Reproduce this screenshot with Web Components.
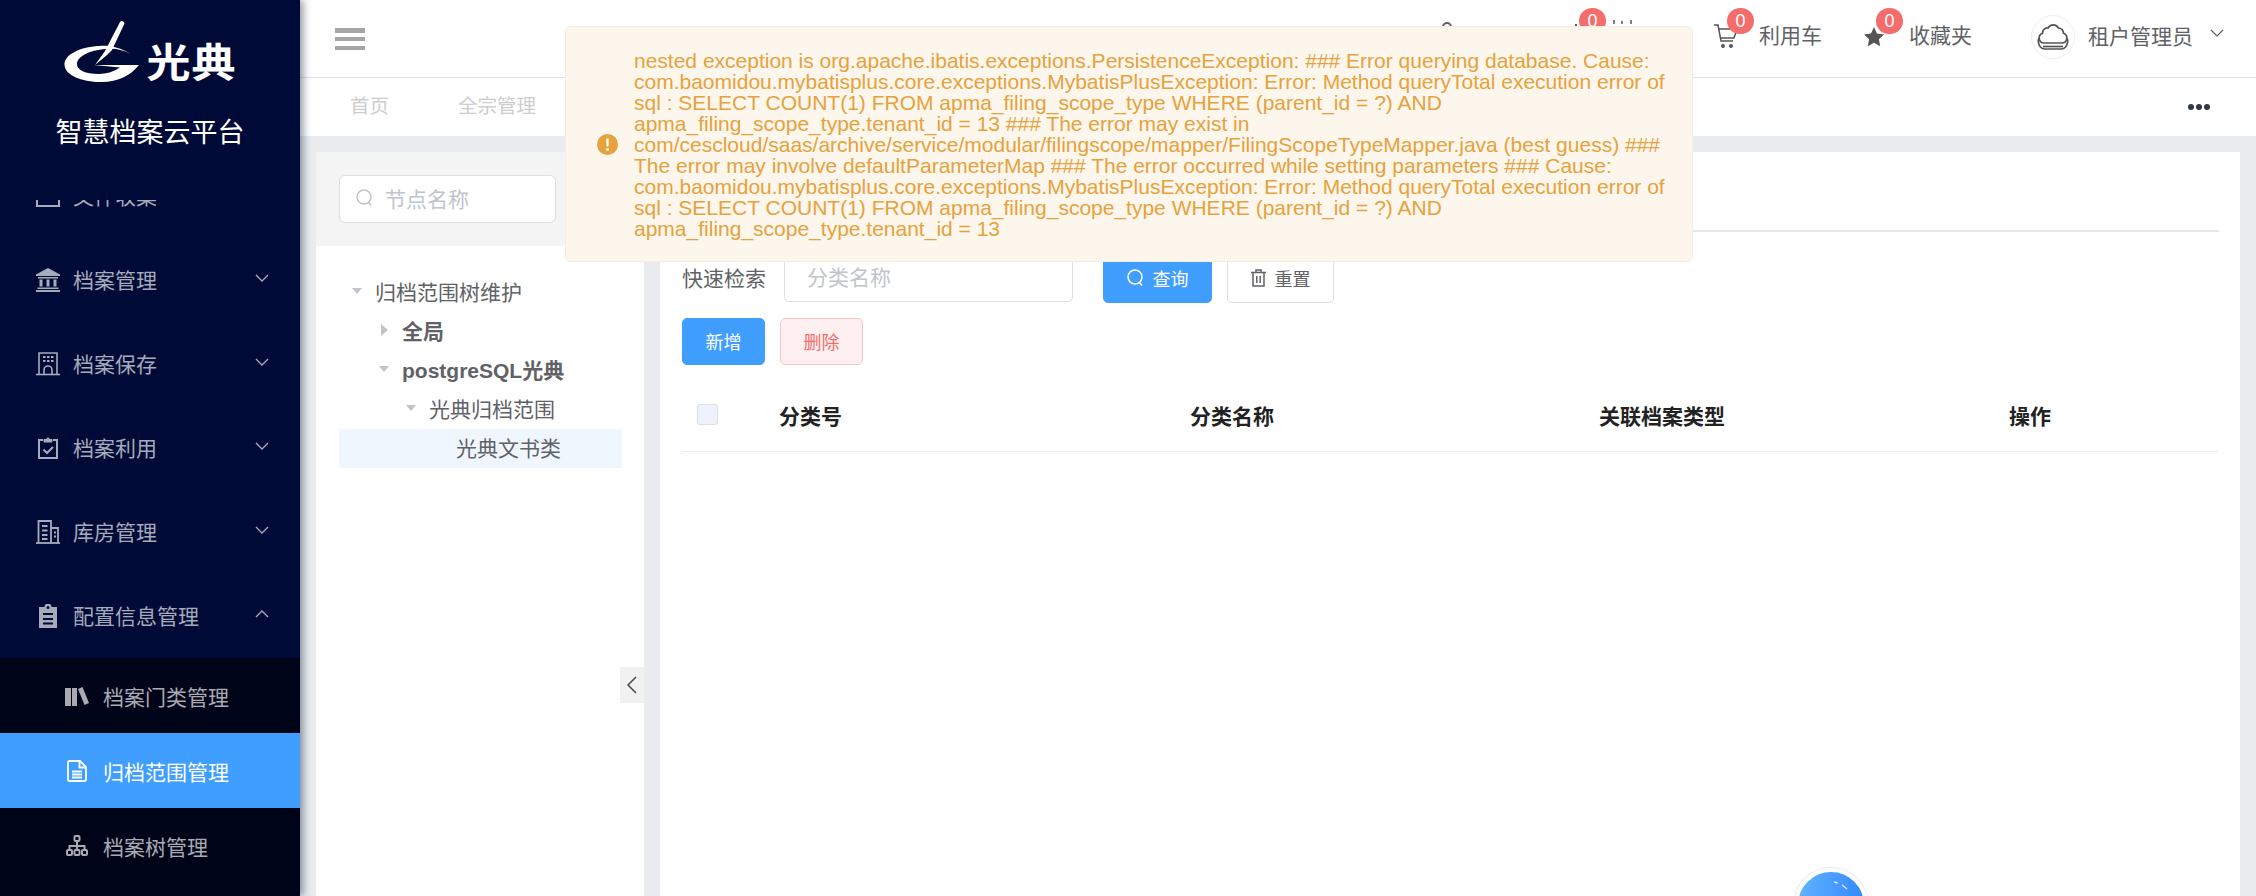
<!DOCTYPE html>
<html lang="zh-CN">
<head>
<meta charset="utf-8">
<title>智慧档案云平台</title>
<style>
  html, body { margin: 0; height: 896px; overflow: hidden; }
  body { display: flex; background: #eaecf0; font-family: "Noto Sans CJK SC", "Liberation Sans", sans-serif; }
  svg { display: block; }
</style>
</head>
<body>
  <gd-sidebar>
    <gd-menu-item label="文件收集">
      <svg slot="icon" width="24" height="24" viewBox="0 0 24 24" fill="none" stroke="currentColor" stroke-width="2"><path d="M1 4h22v18H1z"/><path d="M1 9h22"/></svg>
    </gd-menu-item>
    <gd-menu-item label="档案管理" arrow="down">
      <svg slot="icon" width="24" height="24" viewBox="0 0 24 24" fill="currentColor"><path d="M12 0 L24 6.500 V8 H0 V6.500Z"/><path d="M2 9h20v1.500H2zM3.500 11.500h3v7h-3zM10.500 11.500h3v7h-3zM17.500 11.500h3v7h-3zM1.500 19.500h21V21h-21zM0 22h24v2H0z"/></svg>
    </gd-menu-item>
    <gd-menu-item label="档案保存" arrow="down">
      <svg slot="icon" width="24" height="24" viewBox="0 0 24 24" fill="none" stroke="currentColor" stroke-width="1.600"><path d="M3 22V1h18v21"/><path d="M0 22.500h24"/><path d="M8 22v-4a4 4 0 0 1 8 0v4"/><path d="M7 5h2.500M11 5h2.500M15 5h2.500M7 9h2.500M11 9h2.500M15 9h2.500" stroke-width="2"/></svg>
    </gd-menu-item>
    <gd-menu-item label="档案利用" arrow="down">
      <svg slot="icon" width="24" height="24" viewBox="0 0 24 24" fill="none" stroke="currentColor" stroke-width="2"><path d="M7 4H3v18h18V4h-4"/><path d="M8 6V3.500h2.500a1.500 1.500 0 0 1 3 0H16V6z" fill="currentColor" stroke-width="1"/><path d="M7.500 13.500l3.500 3.500 6-6"/></svg>
    </gd-menu-item>
    <gd-menu-item label="库房管理" arrow="down">
      <svg slot="icon" width="24" height="24" viewBox="0 0 24 24" fill="none" stroke="currentColor" stroke-width="1.800"><path d="M2.500 23V1H15v22"/><path d="M15 8h7v15"/><path d="M0 23h24"/><path d="M6 6h5.500M6 10.500h5.500M6 15h5.500M6 19h5.500M18 12.500h2M18 16.500h2"/></svg>
    </gd-menu-item>
    <gd-menu-item label="配置信息管理" arrow="up">
      <svg slot="icon" width="24" height="24" viewBox="0 0 24 24" fill="currentColor"><path fill-rule="evenodd" d="M3 3h5.500a3.500 3.500 0 0 1 7 0H21v21H3zM10.500 3.500a1.500 1.500 0 0 0 3 0 1.500 1.500 0 0 0-3 0zM7 9v2h10V9zM7 14v2h10v-2zM7 18.500v2h10v-2z"/></svg>
    </gd-menu-item>
    <gd-submenu>
      <gd-sub-item label="档案门类管理">
        <svg slot="icon" width="24" height="20" viewBox="0 0 24 20" fill="currentColor"><path d="M0 2h6v18H0zM7 2h5v18H7zM13 3l4.500-2 6.500 16-4.500 2z"/></svg>
      </gd-sub-item>
      <gd-sub-item label="归档范围管理" active>
        <svg slot="icon" width="20" height="22" viewBox="0 0 20 22" fill="none" stroke="currentColor" stroke-width="1.800"><path d="M2.500 1H13l6 6v12.500a1.500 1.500 0 0 1-1.500 1.500h-15A1.500 1.500 0 0 1 1 19.500v-17A1.500 1.500 0 0 1 2.500 1z"/><path d="M12.500 1v6.500H19M5 11.500h10M5 14.500h10M5 17.500h10"/></svg>
      </gd-sub-item>
      <gd-sub-item label="档案树管理">
        <svg slot="icon" width="22" height="21" viewBox="0 0 22 21" fill="none" stroke="currentColor" stroke-width="2"><rect x="8.500" y="1" width="5" height="5" rx="1"/><rect x="1" y="15" width="5" height="5" rx="1"/><rect x="8.500" y="15" width="5" height="5" rx="1"/><rect x="16" y="15" width="5" height="5" rx="1"/><path d="M11 6v9M3.500 15v-4h15v4"/></svg>
      </gd-sub-item>
    </gd-submenu>
  </gd-sidebar>

  <gd-main>
    <gd-header slot="header">
      <gd-nav-item style="--item-gap:0px;margin-right:122px">
        <svg slot="icon" width="12" height="40" viewBox="0 0 12 40" fill="none" stroke="#606266" stroke-width="2"><path d="M2 9a4 4 0 0 1 8 0"/></svg>
      </gd-nav-item>
      <gd-nav-item count="0" style="--item-gap:8px;--badge-left:4px;--badge-top:-10px;margin-right:41px">
        <svg slot="icon" width="27" height="40" viewBox="0 0 27 40" fill="none" stroke="#606266" stroke-width="2"><path d="M1 10V6"/></svg>
        <svg width="62" height="40" viewBox="0 0 62 40" fill="#808080"><rect x="3" y="6" width="2" height="4"/><rect x="11" y="7" width="2" height="3"/><rect x="20" y="6" width="2" height="4"/></svg>
      </gd-nav-item>
      <gd-nav-item count="0" style="--item-gap:20px;--badge-left:14px;--badge-top:-15px;--icon-lift:4px;margin-right:42px">
        <svg slot="icon" width="26" height="26" viewBox="0 0 26 26" fill="none" stroke="#555" stroke-width="1.500"><path d="M1 2h4l3 16h12"/><path d="M5.500 6H24l-3 9H7.500"/><circle cx="10" cy="23" r="1.200" fill="#555"/><circle cx="18" cy="23" r="1.200" fill="#555"/></svg>
        利用车
      </gd-nav-item>
      <gd-nav-item count="0" style="--item-gap:25px;--badge-left:12px;--badge-top:-19px;--icon-lift:2px;margin-right:59px">
        <svg slot="icon" width="20" height="20" viewBox="0 0 20 20" fill="#555"><path d="M10 0l3 6.500 7 .9-5.100 4.800 1.300 7L10 15.800 3.800 19.200l1.300-7L0 7.400l7-.9z"/></svg>
        收藏夹
      </gd-nav-item>
      <gd-user-menu name="租户管理员"></gd-user-menu>
    </gd-header>

    <gd-tabs slot="tabs">
      <gd-tab>首页</gd-tab>
      <gd-tab>全宗管理</gd-tab>
    </gd-tabs>

    <gd-tree-panel placeholder="节点名称">
      <gd-tree-node arrow="down">归档范围树维护</gd-tree-node>
      <gd-tree-node level="1" arrow="right" bold>全局</gd-tree-node>
      <gd-tree-node level="1" arrow="down" bold>postgreSQL光典</gd-tree-node>
      <gd-tree-node level="2" arrow="down">光典归档范围</gd-tree-node>
      <gd-tree-node level="3" selected>光典文书类</gd-tree-node>
    </gd-tree-panel>

    <gd-scope-panel>
      <gd-button kind="primary" style="margin-left:30px;width:109px">
        <svg slot="icon" width="17" height="18" viewBox="0 0 17 18" fill="none" stroke="currentColor" stroke-width="1.500"><circle cx="8" cy="8" r="7"/><path d="M12.500 13.500l2.500 3"/></svg>
        查询
      </gd-button>
      <gd-button kind="plain" style="margin-left:15px;width:107px">
        <svg slot="icon" width="15" height="18" viewBox="0 0 15 18" fill="none" stroke="currentColor" stroke-width="1.500"><path d="M0 3.500h15M5 3V1h5v2M2 4v13h11V4M5.800 7v7M9.200 7v7"/></svg>
        重置
      </gd-button>
      <gd-button slot="actions" kind="primary" style="width:83px">新增</gd-button>
      <gd-button slot="actions" kind="danger" style="margin-left:15px;width:83px">删除</gd-button>
    </gd-scope-panel>
  </gd-main>

  <gd-notification>nested exception is org.apache.ibatis.exceptions.PersistenceException: ### Error querying database. Cause: com.baomidou.mybatisplus.core.exceptions.MybatisPlusException: Error: Method queryTotal execution error of sql : SELECT COUNT(1) FROM apma_filing_scope_type WHERE (parent_id = ?) AND apma_filing_scope_type.tenant_id = 13 ### The error may exist in com/cescloud/saas/archive/service/modular/filingscope/mapper/FilingScopeTypeMapper.java (best guess) ### The error may involve defaultParameterMap ### The error occurred while setting parameters ### Cause: com.baomidou.mybatisplus.core.exceptions.MybatisPlusException: Error: Method queryTotal execution error of sql : SELECT COUNT(1) FROM apma_filing_scope_type WHERE (parent_id = ?) AND apma_filing_scope_type.tenant_id = 13</gd-notification>
  <gd-float-ball></gd-float-ball>

<script>
class GdSidebar extends HTMLElement {
  constructor() {
    super()
    this.attachShadow({ mode: 'open' })
  }
  connectedCallback() {
    this.shadowRoot.innerHTML = `
    <style>
      :host { display: flex; flex-direction: column; flex: none; width: 300px; height: 896px; background: #000a37; box-shadow: 3px 0 8px rgba(0, 21, 41, .45); position: relative; z-index: 2; color: #fff; }
      .brand { flex: none; height: 200px; display: flex; flex-direction: column; align-items: center; }
      .logo { display: flex; align-items: flex-start; height: 88px; margin-top: 20px; }
      .word { font-size: 44px; font-weight: 700; line-height: 44px; margin-top: 18px; margin-left: 7px; letter-spacing: 1px; transform: scaleY(.9); }
      .title { font-size: 27px; line-height: 36px; margin-top: 5px; }
      .menu { flex: 1; overflow: hidden; min-height: 0; }
      .list { margin-top: -46px; }
    </style>
    <div class="brand">
      <div class="logo">
        <svg width="76" height="64" viewBox="63 20 76 64" fill="#fff">
          <path d="M130 54C118 47 108 45 98 46C78 47 63 55 63.500 65C64 75 80 82 100 82C118 82 130 75 138 65L93 65L119 67.500C112 72 105 74 98 74C84 74 76 70 76 64C76 57 88 50 105 49C115 48 122 50 130 54Z"/>
          <path d="M119 22a2.500 2.500 0 0 1 4.500 1.500L111 50l-5 5-12 10 10-14z"/>
        </svg>
        <div class="word">光典</div>
      </div>
      <div class="title">智慧档案云平台</div>
    </div>
    <div class="menu"><div class="list"><slot></slot></div></div>`
  }
}
customElements.define('gd-sidebar', GdSidebar)

class GdMenuItem extends HTMLElement {
  constructor() {
    super()
    this.attachShadow({ mode: 'open' })
  }
  connectedCallback() {
    const arrow = this.getAttribute('arrow')
    const chevron = arrow === 'up' ? 'M1 8l6-6 6 6' : 'M1 2l6 6 6-6'
    this.shadowRoot.innerHTML = `
    <style>
      :host { display: flex; align-items: center; box-sizing: border-box; height: 84px; padding: 0 0 2px 36px; color: #a6aaba; font-size: 21px; }
      .icon { width: 24px; flex: none; margin-right: 13px; margin-top: 2px; }
      .label { flex: none; width: 182px; line-height: 30px; }
      svg.arrow { display: block; margin-top: -3px; }
    </style>
    <span class="icon"><slot name="icon"></slot></span>
    <span class="label">${this.getAttribute('label')}</span>
    ${arrow ? `<svg class="arrow" width="14" height="10" viewBox="0 0 14 10" fill="none" stroke="currentColor" stroke-width="1.300"><path d="${chevron}"/></svg>` : ''}`
  }
}
customElements.define('gd-menu-item', GdMenuItem)

class GdSubmenu extends HTMLElement {
  constructor() {
    super()
    this.attachShadow({ mode: 'open' })
    this.shadowRoot.innerHTML = `
    <style>:host { display: block; padding-bottom: 20px; background: #000418; }</style>
    <slot></slot>`
  }
}
customElements.define('gd-submenu', GdSubmenu)

class GdSubItem extends HTMLElement {
  constructor() {
    super()
    this.attachShadow({ mode: 'open' })
  }
  connectedCallback() {
    this.shadowRoot.innerHTML = `
    <style>
      :host { display: flex; align-items: center; height: 75px; padding-left: 65px; color: #a9aab2; font-size: 21px; }
      :host([active]) { background: #409eff; color: #fff; }
      .icon { width: 24px; flex: none; margin-right: 14px; display: flex; justify-content: center; }
    </style>
    <span class="icon"><slot name="icon"></slot></span>
    <span>${this.getAttribute('label')}</span>`
  }
}
customElements.define('gd-sub-item', GdSubItem)

class GdMain extends HTMLElement {
  constructor() {
    super()
    this.attachShadow({ mode: 'open' })
    this.shadowRoot.innerHTML = `
    <style>
      :host { display: flex; flex-direction: column; flex: 1; min-width: 0; height: 896px; }
      .body { flex: 1; min-height: 0; display: grid; grid-template-columns: 328px 1fr; gap: 16px; padding: 16px 16px 0; }
    </style>
    <slot name="header"></slot>
    <slot name="tabs"></slot>
    <div class="body"><slot></slot></div>`
  }
}
customElements.define('gd-main', GdMain)

class GdHeader extends HTMLElement {
  constructor() {
    super()
    this.attachShadow({ mode: 'open' })
    this.shadowRoot.innerHTML = `
    <style>
      :host { display: flex; align-items: center; flex: none; box-sizing: border-box; height: 78px; padding: 0 32px 10px 35px; background: #fff; border-bottom: 1px solid #e0e2e6; }
      .burger { width: 30px; height: 22px; margin-top: 11px; background: linear-gradient(#a5a5a5 0 5px, transparent 5px 9px, #a5a5a5 9px 13px, transparent 13px 18px, #a5a5a5 18px); }
      .right { margin-left: auto; display: flex; align-items: center; }
    </style>
    <div class="burger"></div>
    <div class="right"><slot></slot></div>`
  }
}
customElements.define('gd-header', GdHeader)

class GdNavItem extends HTMLElement {
  constructor() {
    super()
    this.attachShadow({ mode: 'open' })
  }
  connectedCallback() {
    const count = this.getAttribute('count')
    this.shadowRoot.innerHTML = `
    <style>
      :host { display: flex; align-items: center; position: relative; color: #606266; font-size: 21px; line-height: 30px; height: 40px; margin-top: 8px; }
      .icon { display: block; margin-right: var(--item-gap, 20px); margin-bottom: var(--icon-lift, 0); position: relative; }
      .text { padding-bottom: 7px; }
      .badge { position: absolute; left: var(--badge-left, 12px); top: var(--badge-top, -15px); box-sizing: border-box; width: 27px; height: 26px; border-radius: 13px; background: #f56c6c; color: #fff; font: 18px/26px "Liberation Sans", sans-serif; text-align: center; }
    </style>
    <span class="icon"><slot name="icon"></slot>${count !== null ? `<span class="badge">${count}</span>` : ''}</span>
    <span class="text"><slot></slot></span>`
  }
}
customElements.define('gd-nav-item', GdNavItem)

class GdUserMenu extends HTMLElement {
  constructor() {
    super()
    this.attachShadow({ mode: 'open' })
  }
  connectedCallback() {
    this.shadowRoot.innerHTML = `
    <style>
      :host { display: flex; align-items: center; color: #606266; font-size: 21px; margin-top: 6px; }
      .avatar { box-sizing: border-box; width: 44px; height: 44px; border-radius: 50%; border: 1px solid #eeeeee; display: flex; align-items: center; justify-content: center; margin-right: 13px; }
      .name { padding-bottom: 4px; }
      .chev { margin-left: 17px; margin-bottom: 6px; }
    </style>
    <span class="avatar">
      <svg width="32" height="28" viewBox="0 0 32 28" fill="none" stroke="#555" stroke-width="1.700"><path d="M7 20a5 5 0 0 1-1.500-9.700A5 5 0 0 1 11 5a6 6 0 0 1 10.500 0 5 5 0 0 1 5 5.300A5 5 0 0 1 25 20z"/><path d="M2 15c-2 5 1 11 6 11h16c5 0 8-6 6-11"/><path d="M6 23.500h20"/></svg>
    </span>
    <span class="name">${this.getAttribute('name')}</span>
    <svg class="chev" width="14" height="9" viewBox="0 0 14 9" fill="none" stroke="#606266" stroke-width="1.200"><path d="M1 1l6 6 6-6"/></svg>`
  }
}
customElements.define('gd-user-menu', GdUserMenu)

class GdTabs extends HTMLElement {
  constructor() {
    super()
    this.attachShadow({ mode: 'open' })
    this.shadowRoot.innerHTML = `
    <style>
      :host { display: flex; align-items: center; flex: none; height: 58px; padding: 0 46px 0 50px; background: #fff; gap: 69px; }
      .more { margin-left: auto; display: flex; gap: 2px; }
      .more i { width: 6px; height: 6px; border-radius: 50%; background: #2f3a45; }
    </style>
    <slot></slot>
    <div class="more"><i></i><i></i><i></i></div>`
  }
}
customElements.define('gd-tabs', GdTabs)

class GdTab extends HTMLElement {
  constructor() {
    super()
    this.attachShadow({ mode: 'open' })
    this.shadowRoot.innerHTML = `
    <style>:host { display: block; color: #cdcdcd; font-size: 19.500px; padding-bottom: 6px; }</style>
    <slot></slot>`
  }
}
customElements.define('gd-tab', GdTab)

class GdTreePanel extends HTMLElement {
  constructor() {
    super()
    this.attachShadow({ mode: 'open' })
  }
  connectedCallback() {
    this.shadowRoot.innerHTML = `
    <style>
      :host { display: flex; flex-direction: column; background: #fff; position: relative; min-height: 0; }
      .search { flex: none; height: 94px; box-sizing: border-box; padding: 23px 88px 0 23px; background: #f4f4f5; }
      .box { box-sizing: border-box; height: 48px; display: flex; align-items: center; gap: 12px; padding: 0 0 2px 16px; background: #fff; border: 1px solid #dcdfe6; border-radius: 6px; color: #c0c4cc; font-size: 21px; }
      .tree { padding: 27px 22px 0 23px; }
      .collapse { position: absolute; right: 0; top: 515px; width: 24px; height: 36px; background: #f1f1f1; display: flex; align-items: center; justify-content: center; }
    </style>
    <div class="search">
      <div class="box">
        <svg width="17" height="18" viewBox="0 0 17 18" fill="none" stroke="#c0c4cc" stroke-width="1.500"><circle cx="8" cy="8" r="7"/><path d="M12.500 13.500l2.500 3"/></svg>
        <span>${this.getAttribute('placeholder')}</span>
      </div>
    </div>
    <div class="tree"><slot></slot></div>
    <div class="collapse">
      <svg width="10" height="18" viewBox="0 0 10 18" fill="none" stroke="#444" stroke-width="1.500"><path d="M9 1L1 9l8 8"/></svg>
    </div>`
  }
}
customElements.define('gd-tree-panel', GdTreePanel)

class GdTreeNode extends HTMLElement {
  constructor() {
    super()
    this.attachShadow({ mode: 'open' })
  }
  connectedCallback() {
    const level = Number(this.getAttribute('level') ?? 0)
    const arrow = this.getAttribute('arrow') ?? ''
    this.shadowRoot.innerHTML = `
    <style>
      :host { display: flex; align-items: center; box-sizing: border-box; height: 39px; padding: 0 0 3px ${level * 27}px; color: #606266; font: 21px "Noto Sans CJK SC", sans-serif; }
      :host([bold]) { font: bold 21px "Liberation Sans", "Noto Sans CJK SC", sans-serif; }
      :host([selected]) { background: #f0f6fd; }
      .arrow { flex: none; width: 36px; display: flex; justify-content: center; box-sizing: border-box; }
      .down { border: 5.500px solid transparent; border-top: 6.500px solid #c0c4cc; border-bottom: 0; }
      .right { border: 6px solid transparent; border-left: 7px solid #c0c4cc; border-right: 0; }
    </style>
    <span class="arrow"><span class="${arrow}"></span></span>
    <slot></slot>`
  }
}
customElements.define('gd-tree-node', GdTreeNode)

class GdButton extends HTMLElement {
  constructor() {
    super()
    this.attachShadow({ mode: 'open' })
    this.shadowRoot.innerHTML = `
    <style>
      :host { display: inline-flex; align-items: center; justify-content: center; box-sizing: border-box; height: 48px; padding-bottom: 2px; gap: 9px; border-radius: 5px; border: 1px solid #dcdfe6; background: #fff; color: #606266; font-size: 18px; }
      :host([kind="primary"]) { background: #409eff; border-color: #409eff; color: #fff; }
      :host([kind="danger"]) { background: #fef0f0; border-color: #fbc4c4; color: #f56c6c; }
      :host([slot="actions"]) { height: 47px; }
    </style>
    <slot name="icon"></slot><span><slot></slot></span>`
  }
}
customElements.define('gd-button', GdButton)

class GdScopePanel extends HTMLElement {
  constructor() {
    super()
    this.attachShadow({ mode: 'open' })
    this.shadowRoot.innerHTML = `
    <style>
      :host { display: block; background: #fff; padding: 0 21px 0 22px; min-height: 0; }
      .tabs { box-sizing: border-box; height: 80px; border-bottom: 2px solid #e4e7ed; }
      .filter { display: flex; align-items: flex-start; margin-top: 23px; height: 48px; }
      .lab { color: #606266; font-size: 21px; line-height: 44px; margin-right: 18px; }
      .input { box-sizing: border-box; width: 289px; height: 47px; padding-left: 22px; line-height: 41px; border: 1px solid #dcdfe6; border-radius: 5px; color: #c0c4cc; font-size: 21px; }
      .actions { display: flex; margin-top: 15px; height: 47px; }
      .row { display: grid; grid-template-columns: 97px 411px 409px 410px 1fr; align-items: center; box-sizing: border-box; height: 73px; padding-bottom: 1px; margin-top: 14px; border-bottom: 1px solid #ebeef5; color: #222; font-size: 21px; font-weight: 700; }
      .check { box-sizing: border-box; display: block; width: 21px; height: 21px; margin-left: 15px; border: 1px solid #dcdfe6; border-radius: 3px; background: #edf2fc; }
    </style>
    <div class="tabs"></div>
    <div class="filter">
      <span class="lab">快速检索</span>
      <div class="input">分类名称</div>
      <slot></slot>
    </div>
    <div class="actions"><slot name="actions"></slot></div>
    <div class="row">
      <span><i class="check"></i></span>
      <span>分类号</span><span>分类名称</span><span>关联档案类型</span><span>操作</span>
    </div>`
  }
}
customElements.define('gd-scope-panel', GdScopePanel)

class GdNotification extends HTMLElement {
  constructor() {
    super()
    this.attachShadow({ mode: 'open' })
    this.shadowRoot.innerHTML = `
    <style>
      :host { position: fixed; left: 565px; top: 26px; z-index: 10; box-sizing: border-box; width: 1128px; height: 236px; display: flex; align-items: center; padding: 0 20px 0 31px; background: #fdf6ec; border: 1px solid #faecd8; border-radius: 6px; color: #e6a23c; font: 21px/21px "Liberation Sans", sans-serif; }
      svg { flex: none; margin-right: 16px; }
    </style>
    <svg width="21" height="21" viewBox="0 0 21 21"><circle cx="10.500" cy="10.500" r="10.500" fill="#e6a23c"/><path d="M9.200 4.500h2.600l-.4 8h-1.800zM9.200 14.200h2.600v2.500H9.200z" fill="#fff"/></svg>
    <div><slot></slot></div>`
  }
}
customElements.define('gd-notification', GdNotification)

class GdFloatBall extends HTMLElement {
  constructor() {
    super()
    this.attachShadow({ mode: 'open' })
    this.shadowRoot.innerHTML = `
    <style>
      :host { position: fixed; left: 1794px; top: 868px; z-index: 5; box-sizing: border-box; width: 74px; height: 74px; border-radius: 50%; background: linear-gradient(100deg, #62b4ff, #2f84ff); border: 4px solid #fff; box-shadow: 0 0 0 1px #dfe8ef; }
      svg { position: absolute; left: 0; top: 0; }
    </style>
    <svg width="66" height="66" viewBox="0 0 66 66" fill="none" stroke="#fff"><path d="M36.500 10l3 1" stroke-width="1.600"/><path d="M44 13l5 4" stroke-width="1.200" opacity=".8"/></svg>`
  }
}
customElements.define('gd-float-ball', GdFloatBall)
</script>
</body>
</html>
